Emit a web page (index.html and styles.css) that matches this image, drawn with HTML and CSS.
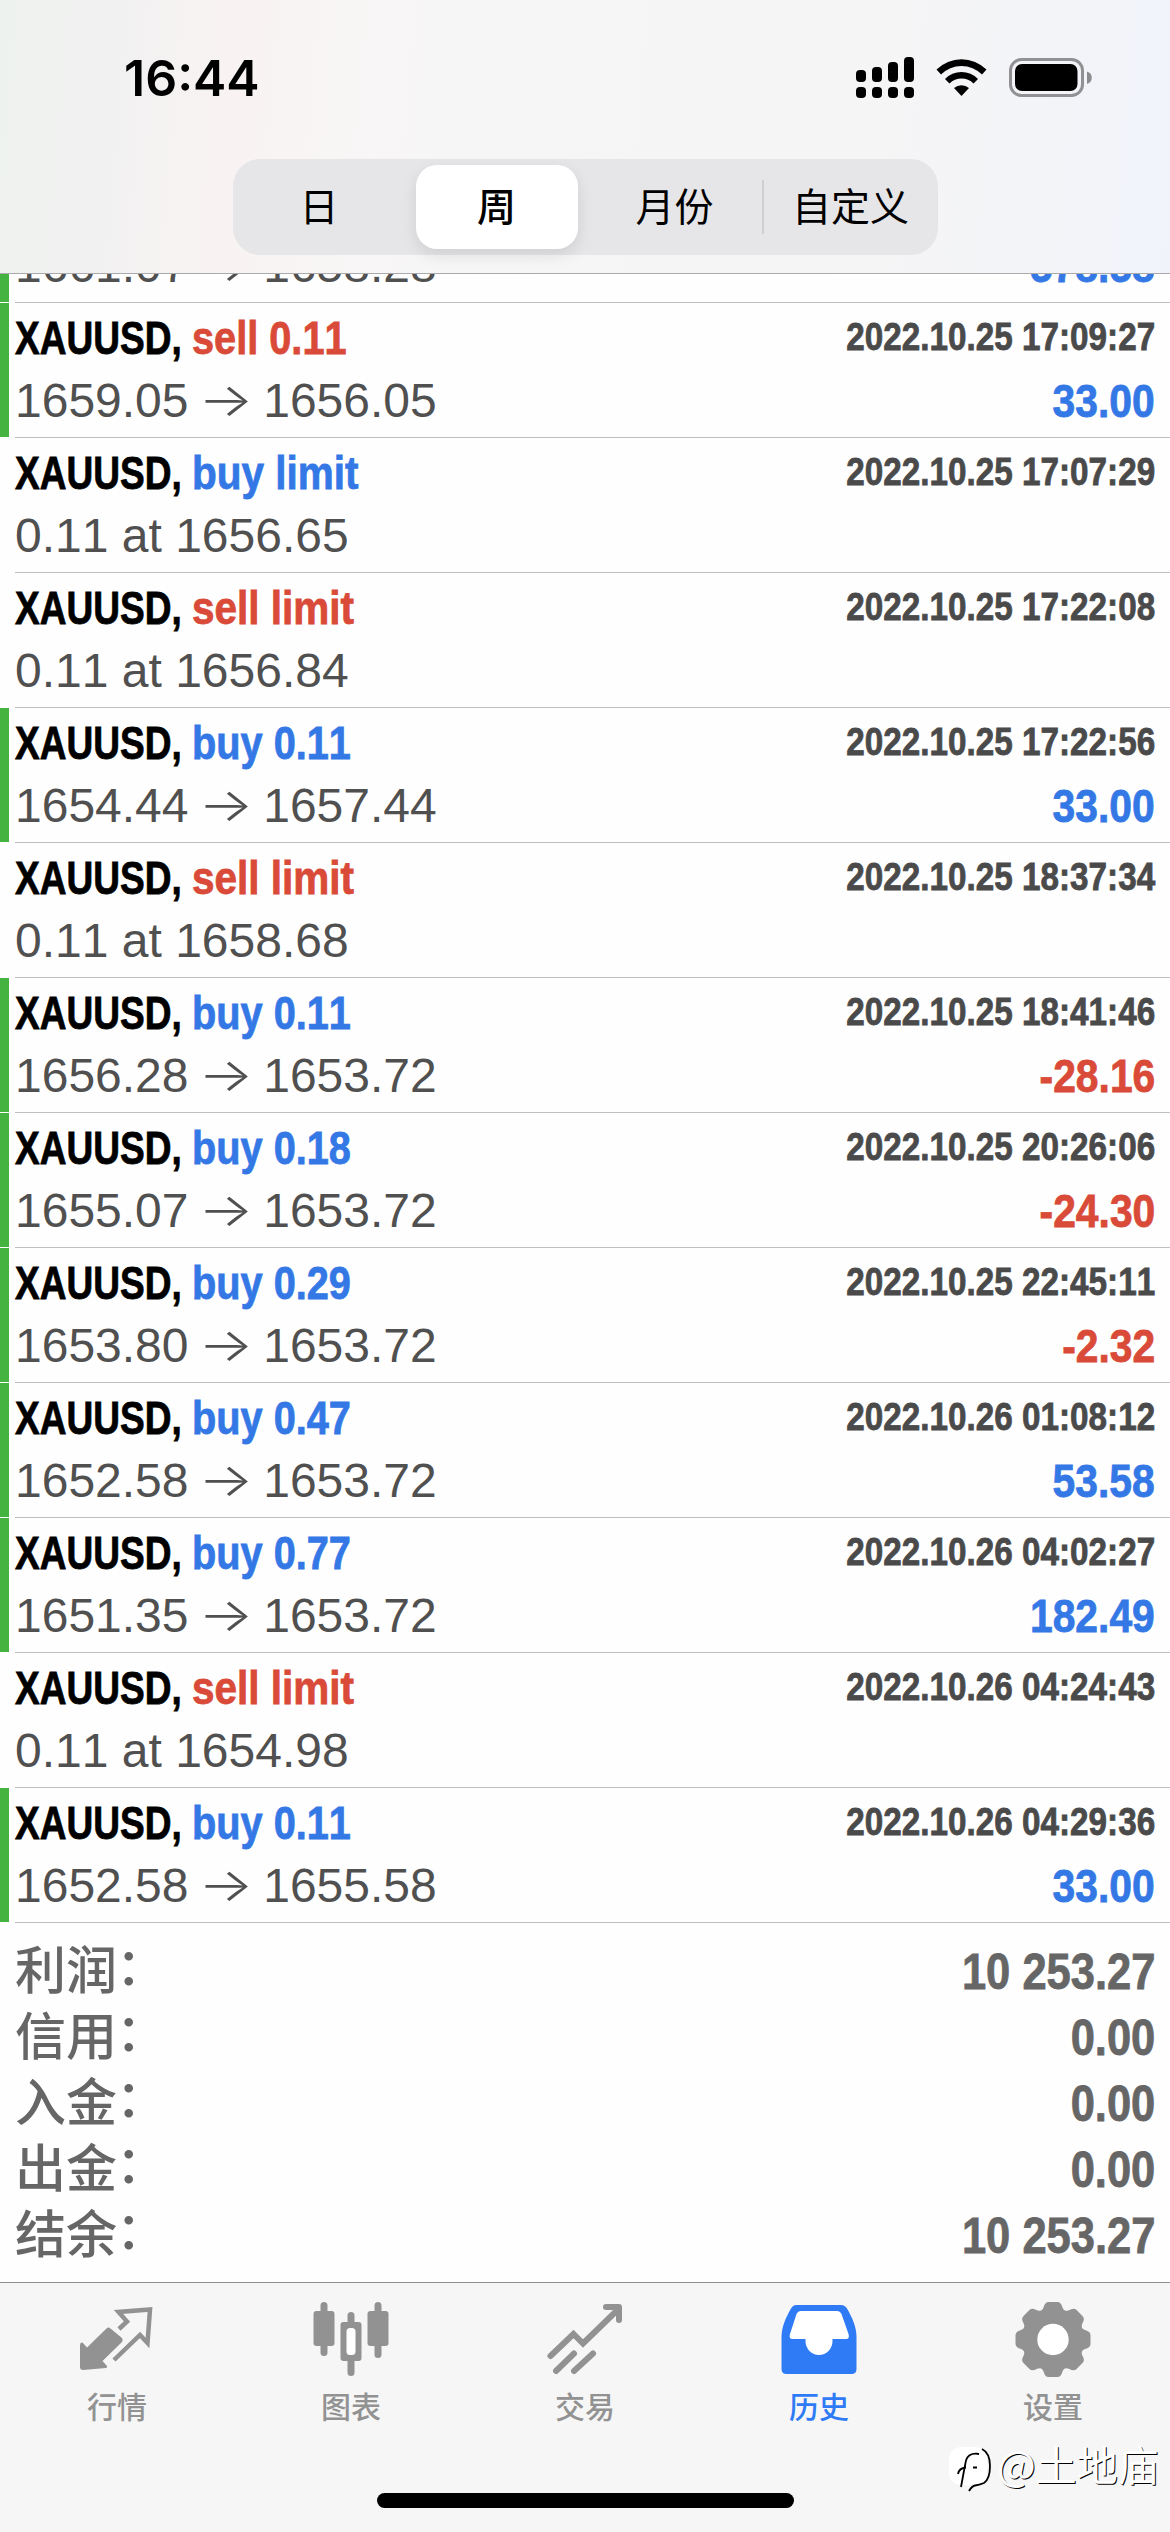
FILE: index.html
```html
<!DOCTYPE html>
<html lang="zh-CN">
<head>
<meta charset="utf-8">
<title>历史</title>
<link rel="stylesheet" href="styles.css">
</head>
<body>
<header class="top">
  <div class="status">
    <div class="clock">16:44</div>
    <svg class="status-icons" viewBox="0 0 240 44" width="240" height="44">
      <g>
        <rect x="0" y="14" width="10" height="12" rx="4"/><rect x="16" y="11" width="10" height="15" rx="4"/>
        <rect x="32" y="6" width="10" height="20" rx="4"/><rect x="48" y="1" width="10" height="25" rx="4"/>
        <rect x="0" y="31" width="10" height="11" rx="4"/><rect x="16" y="31" width="10" height="11" rx="4"/>
        <rect x="32" y="31" width="10" height="11" rx="4"/><rect x="48" y="31" width="10" height="11" rx="4"/>
      </g>
      <path d="M80.500 13.500A35.500 35.500 0 0 1 130.500 13.500L126 18.500A29 29 0 0 0 85 18.500Z"/>
      <path d="M89 23A23 23 0 0 1 122 23L117.500 27.500A17 17 0 0 0 93.500 27.500Z"/>
      <path d="M98 32A11.500 11.500 0 0 1 113 32L105.500 40Z"/>
      <rect x="154.500" y="3.500" width="72" height="36" rx="11" fill="none" stroke="#919194" stroke-width="3"/>
      <rect x="159" y="8" width="62.500" height="27" rx="7"/>
      <path d="M231 15.500a6.500 6.500 0 0 1 0 12.500Z" fill="#8c8c8f"/>
    </svg>
  </div>
  <nav class="segments">
    <span class="seg seg-first">日</span>
    <span class="seg seg-on">周</span>
    <span class="seg seg-line">月份</span>
    <span class="seg">自定义</span>
  </nav>
</header>

<main class="list">
  <section class="deal closed"><div class="line"><b class="sym">XAUUSD,</b><b class="act sell">sell 1.26</b><time>2022.10.25 17:01:12</time></div><div class="line"><span class="price">1661.07 <u>→</u> 1658.28</span><b class="sum up">578.58</b></div></section>
  <section class="deal closed"><div class="line"><b class="sym">XAUUSD,</b><b class="act sell">sell 0.11</b><time>2022.10.25 17:09:27</time></div><div class="line"><span class="price">1659.05 <u>→</u> 1656.05</span><b class="sum up">33.00</b></div></section>
  <section class="deal"><div class="line"><b class="sym">XAUUSD,</b><b class="act limit buy">buy limit</b><time>2022.10.25 17:07:29</time></div><div class="line"><span class="price">0.11 at 1656.65</span></div></section>
  <section class="deal"><div class="line"><b class="sym">XAUUSD,</b><b class="act limit sell">sell limit</b><time>2022.10.25 17:22:08</time></div><div class="line"><span class="price">0.11 at 1656.84</span></div></section>
  <section class="deal closed"><div class="line"><b class="sym">XAUUSD,</b><b class="act buy">buy 0.11</b><time>2022.10.25 17:22:56</time></div><div class="line"><span class="price">1654.44 <u>→</u> 1657.44</span><b class="sum up">33.00</b></div></section>
  <section class="deal"><div class="line"><b class="sym">XAUUSD,</b><b class="act limit sell">sell limit</b><time>2022.10.25 18:37:34</time></div><div class="line"><span class="price">0.11 at 1658.68</span></div></section>
  <section class="deal closed"><div class="line"><b class="sym">XAUUSD,</b><b class="act buy">buy 0.11</b><time>2022.10.25 18:41:46</time></div><div class="line"><span class="price">1656.28 <u>→</u> 1653.72</span><b class="sum down">-28.16</b></div></section>
  <section class="deal closed"><div class="line"><b class="sym">XAUUSD,</b><b class="act buy">buy 0.18</b><time>2022.10.25 20:26:06</time></div><div class="line"><span class="price">1655.07 <u>→</u> 1653.72</span><b class="sum down">-24.30</b></div></section>
  <section class="deal closed"><div class="line"><b class="sym">XAUUSD,</b><b class="act buy">buy 0.29</b><time>2022.10.25 22:45:11</time></div><div class="line"><span class="price">1653.80 <u>→</u> 1653.72</span><b class="sum down">-2.32</b></div></section>
  <section class="deal closed"><div class="line"><b class="sym">XAUUSD,</b><b class="act buy">buy 0.47</b><time>2022.10.26 01:08:12</time></div><div class="line"><span class="price">1652.58 <u>→</u> 1653.72</span><b class="sum up">53.58</b></div></section>
  <section class="deal closed"><div class="line"><b class="sym">XAUUSD,</b><b class="act buy">buy 0.77</b><time>2022.10.26 04:02:27</time></div><div class="line"><span class="price">1651.35 <u>→</u> 1653.72</span><b class="sum up">182.49</b></div></section>
  <section class="deal"><div class="line"><b class="sym">XAUUSD,</b><b class="act limit sell">sell limit</b><time>2022.10.26 04:24:43</time></div><div class="line"><span class="price">0.11 at 1654.98</span></div></section>
  <section class="deal closed"><div class="line"><b class="sym">XAUUSD,</b><b class="act buy">buy 0.11</b><time>2022.10.26 04:29:36</time></div><div class="line"><span class="price">1652.58 <u>→</u> 1655.58</span><b class="sum up">33.00</b></div></section>
  <dl class="totals">
    <div class="total"><dt>利润<i>：</i></dt><dd>10 253.27</dd></div>
    <div class="total"><dt>信用<i>：</i></dt><dd>0.00</dd></div>
    <div class="total"><dt>入金<i>：</i></dt><dd>0.00</dd></div>
    <div class="total"><dt>出金<i>：</i></dt><dd>0.00</dd></div>
    <div class="total"><dt>结余<i>：</i></dt><dd>10 253.27</dd></div>
  </dl>
</main>

<footer class="tabs">
  <div class="tab">
    <svg viewBox="0 0 78 78" width="78" height="78">
      <path d="M32.500 31.500Q30.500 29.500 28.500 31.500L9 50.500L4.500 45.500Q2 45 2 48V70Q2 73 5 73L28 71Q30 70 28.500 68.500L24.500 64L44 45Q45.500 43 44 41Z"/>
      <path d="M41 32L49 24.500L40.500 15L72 12.500L69.500 46L62 38L36 63" fill="none" stroke="currentColor" stroke-width="4.500"/>
    </svg><span>行情</span>
  </div>
  <div class="tab">
    <svg viewBox="0 0 78 78" width="78" height="78">
      <rect x="8.500" y="5" width="7" height="54" rx="3.500"/><rect x="1.500" y="14" width="21" height="35" rx="3"/>
      <rect x="62.500" y="5" width="7" height="56" rx="3.500"/><rect x="55.500" y="14" width="21" height="35" rx="3"/>
      <rect x="35.500" y="15" width="7" height="64" rx="3.500"/><rect x="28.500" y="25" width="21" height="39" rx="3"/>
      <rect x="34.500" y="31" width="9" height="27" rx="3.500" fill="#fff"/>
    </svg><span>图表</span>
  </div>
  <div class="tab">
    <svg class="outline" viewBox="0 0 78 78" width="78" height="78" stroke="currentColor" stroke-width="6" stroke-linecap="round">
      <path d="M4.500 59L27.500 37L37 46.500L72 12.500"/><path d="M60 10H73V23" stroke-linejoin="round"/>
      <path d="M10 74L28 56.500M28 74L47 56.500"/>
    </svg><span>交易</span>
  </div>
  <div class="tab tab-on">
    <svg viewBox="0 0 78 78" width="78" height="78">
      <path d="M16 8H61Q65 8 67 11.500C72 20 76.500 30 76.500 40V72Q76.500 77 71.500 77H6.500Q1.500 77 1.500 72V40C1.500 30 6 20 11 11.500Q13 8 16 8Z"/>
      <path d="M21 14H57Q60 14 61.500 17L68.500 37Q70 42 66 42H52.500V44A13.500 14 0 0 1 25.500 44V42H12.500Q8.500 42 10 37L16.500 17Q18 14 21 14Z" fill="#fff"/>
    </svg><span>历史</span>
  </div>
  <div class="tab">
    <svg viewBox="0 0 78 78" width="78" height="78">
      <g transform="translate(39 42.500)">
        <circle r="30"/>
        <path id="tooth" d="M-15 -27Q-10.500 -29 -9.500 -32Q-8 -37.500 -4.500 -37.500H4.500Q8 -37.500 9.500 -32Q10.500 -29 15 -27V-15H-15Z"/>
        <use href="#tooth" transform="rotate(45)"/><use href="#tooth" transform="rotate(90)"/><use href="#tooth" transform="rotate(135)"/><use href="#tooth" transform="rotate(180)"/><use href="#tooth" transform="rotate(225)"/><use href="#tooth" transform="rotate(270)"/><use href="#tooth" transform="rotate(315)"/>
        <circle r="15.700" fill="#fff"/>
      </g>
    </svg><span>设置</span>
  </div>
  <div class="mark">
    <svg viewBox="0 0 48 48" width="48" height="48">
      <rect x="1" y="3" width="38" height="38" rx="12" fill="#fff"/>
      <path d="M34 5Q42 9 42 22Q42 35 36 39Q31 41 27 41.500Q24 42 21 47" fill="none" stroke="#000" stroke-width="1.800"/>
      <path d="M31 10Q19 8 17.500 19L16.500 24L13 43M10 30Q11 24 18 23.500M25 23.500H29" fill="none" stroke="#000" stroke-width="1.800"/>
    </svg><span>@土地庙</span>
  </div>
  <div class="home"></div>
</footer>
</body>
</html>
```
FILE: styles.css
```css
* { box-sizing: border-box; }
body {
  margin: 0;
  width: 1170px;
  height: 2532px;
  overflow: hidden;
  display: flex;
  flex-direction: column;
  background: #fefefe;
  font-family: "Liberation Sans", "Noto Sans CJK SC", sans-serif;
}
.top {
  height: 274px;
  flex: none;
  border-bottom: 1px solid #aaaaac;
  background: linear-gradient(95deg, #eef2ee 0, #f1f1f1 9%, #f8f3f2 20%, #f8f6f6 32%, #f6f6f6 45%, #f5f5f6 75%, #f3f4f8 90%, #f0f3fb 100%);
  display: flex;
  flex-direction: column;
  align-items: center;
}
.status {
  width: 100%;
  height: 159px;
  padding: 48px 74px 0 124px;
  display: flex;
  justify-content: space-between;
}
.clock { font: 600 50px/60px Inter, sans-serif; }
.status-icons { margin-top: 8px; }
.segments {
  width: 705px;
  height: 96px;
  padding: 6px;
  border-radius: 27px;
  background: #e6e5e7;
  display: grid;
  grid-template-columns: 177px 162px 192px 162px;
  font: 400 39px/79px "Noto Sans CJK SC", sans-serif;
  text-align: center;
}
.seg-first { padding-right: 16px; }
.seg-on {
  background: #fff;
  border-radius: 21px;
  font-weight: 500;
  box-shadow: 0 6px 16px rgba(0, 0, 0, .1);
}
.seg-line {
  padding-left: 2px;
  background: linear-gradient(#cfcfd2, #cfcfd2) 184px 15px / 2px 54px no-repeat;
}
.list {
  height: 2008px;
  flex: none;
  display: flex;
  flex-direction: column;
  justify-content: flex-end;
  overflow: hidden;
  font-kerning: none;
}
.deal {
  height: 135px;
  flex: none;
  padding: 4px 15px 0 15px;
  background:
    linear-gradient(#bfbfc1, #bfbfc1) 15px 100% / 100% 1px no-repeat;
}
.closed {
  background:
    linear-gradient(#bfbfc1, #bfbfc1) 15px 100% / 100% 1px no-repeat,
    linear-gradient(#45b33f, #45b33f) 0 0 / 9px 134px no-repeat;
}
.line {
  height: 62px;
  display: flex;
  line-height: 62px;
  white-space: nowrap;
}
.sym, .act, time, .sum, dd {
  font-weight: 700;
  -webkit-text-stroke: .8px currentColor;
}
.sym, .act {
  font-size: 47px;
  transform-origin: 0 50%;
}
.sym { width: 177px; color: #000; transform: scaleX(.788); }
.act { transform: scaleX(.845); }
.limit { transform: scaleX(.862); }
.buy, .up { color: #3478e6; }
.sell, .down { color: #d94a38; }
time, .sum, dd {
  margin-left: auto;
  transform-origin: 100% 50%;
}
time {
  font-size: 39px;
  line-height: 59px;
  color: #4a4a4b;
  transform: scaleX(.853);
}
.price { font-size: 48px; line-height: 64px; color: #505050; }
.price u {
  display: inline-flex;
  justify-content: center;
  width: 48px;
  font: 300 58px/48px Inter, sans-serif;
  text-decoration: none;
  transform: translateY(3px) scaleY(.8);
}
.sum { font-size: 47px; line-height: 63px; transform: scaleX(.868); }
.down { letter-spacing: 0; }
.totals {
  height: 359px;
  flex: none;
  margin: 0;
  padding: 16px 15px 0;
  color: #666;
}
.total {
  height: 66px;
  display: flex;
  line-height: 66px;
}
dt { font: 500 51px/57px "Noto Sans CJK SC", sans-serif; }
dt i {
  display: inline-block;
  font-style: normal;
  transform: translate(-1px, -4px);
}
dd { font-size: 50px; transform: scaleX(.87); }
.tabs {
  position: relative;
  height: 250px;
  flex: none;
  border-top: 1px solid #8e8e93;
  background: #f6f6f6;
  display: grid;
  grid-template-columns: repeat(5, 1fr);
  color: #929292;
}
.tab {
  padding-top: 14px;
  display: flex;
  flex-direction: column;
  align-items: center;
  font: 500 30px/44px "Noto Sans CJK SC", sans-serif;
}
.tab svg { margin-bottom: 8px; fill: currentColor; overflow: visible; }
.tab .outline { fill: none; }
.tab-on { color: #2f7bf6; }
.mark {
  position: absolute;
  left: 948px;
  top: 161px;
  display: flex;
  gap: 1px;
  color: #fff;
  font: 400 41px/38px "Noto Sans CJK SC", sans-serif;
  text-shadow: 1px 1px 0 #000;
}
.home {
  position: absolute;
  left: 377px;
  top: 210px;
  width: 417px;
  height: 15px;
  border-radius: 8px;
  background: #000;
}
```
